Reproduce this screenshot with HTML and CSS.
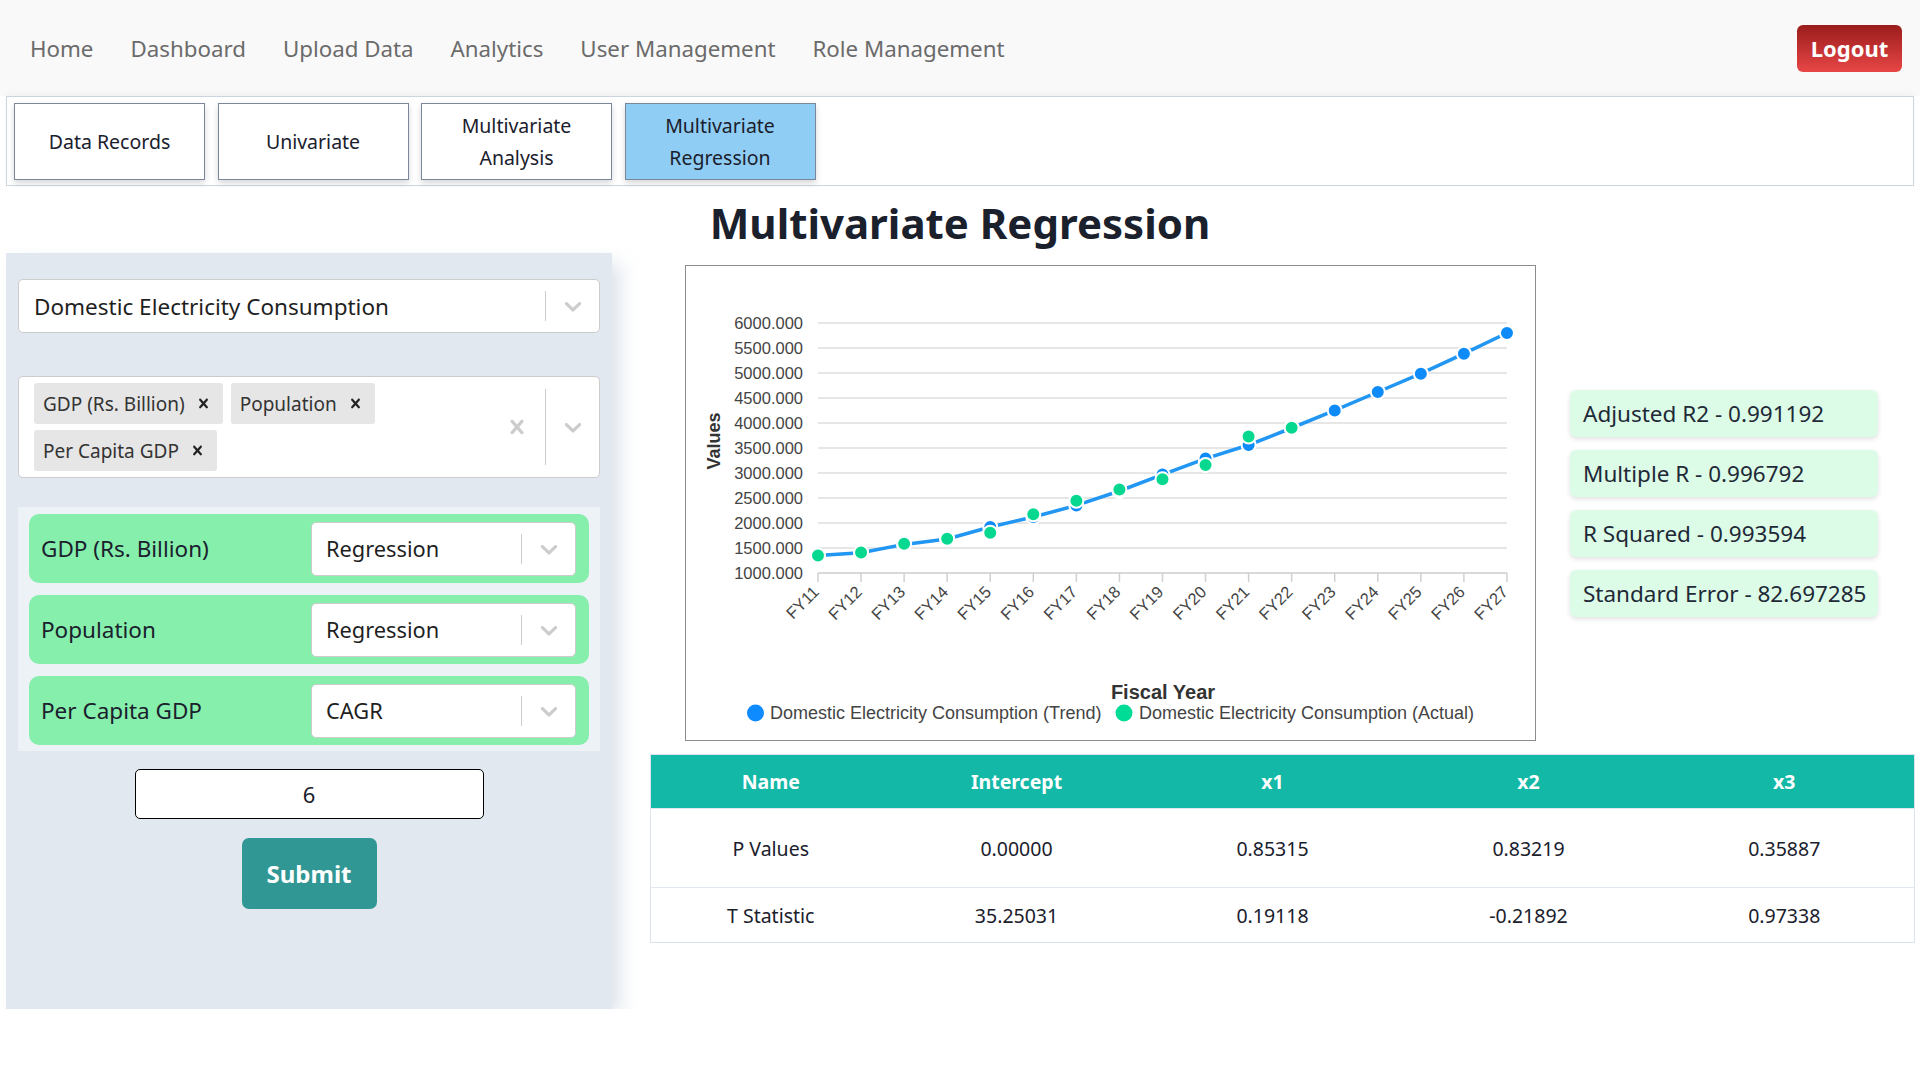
FILE: index.html
```html
<!DOCTYPE html>
<html lang="en">
<head>
<meta charset="utf-8">
<title>Multivariate Regression</title>
<link rel="stylesheet" href="styles.css">
</head>
<body>
<header class="nav">
  <nav class="nav-links">
    <span class="nav-link">Home</span>
    <span class="nav-link">Dashboard</span>
    <span class="nav-link">Upload Data</span>
    <span class="nav-link">Analytics</span>
    <span class="nav-link">User Management</span>
    <span class="nav-link">Role Management</span>
  </nav>
  <div class="logout">Logout</div>
</header>

<div class="tabbar">
  <div class="tab">Data Records</div>
  <div class="tab">Univariate</div>
  <div class="tab">Multivariate<br>Analysis</div>
  <div class="tab active">Multivariate<br>Regression</div>
</div>

<h1 class="title">Multivariate Regression</h1>

<main class="main">
  <aside class="panel">
    <div class="select">
      <div class="select-value">Domestic Electricity Consumption</div>
      <div class="sep"></div>
      <div class="indicator">
        <svg class="chev" viewBox="0 0 20 20"><path d="M4.516 7.548c0.436-0.446 1.043-0.481 1.576 0l3.908 3.747 3.908-3.747c0.533-0.481 1.141-0.446 1.574 0 0.436 0.445 0.408 1.197 0 1.615-0.406 0.418-4.695 4.502-4.695 4.502-0.217 0.223-0.502 0.335-0.787 0.335s-0.57-0.112-0.789-0.335c0 0-4.287-4.084-4.695-4.502s-0.436-1.170 0-1.615z"/></svg>
      </div>
    </div>

    <div class="select multi">
      <div class="chips">
        <div class="chip"><span>GDP (Rs. Billion)</span><svg class="chip-x" viewBox="0 0 20 20"><path d="M14.348 14.849c-0.469 0.469-1.229 0.469-1.697 0l-2.651-3.030-2.651 3.029c-0.469 0.469-1.229 0.469-1.697 0-0.469-0.469-0.469-1.229 0-1.697l2.758-3.15-2.759-3.152c-0.469-0.469-0.469-1.228 0-1.697s1.228-0.469 1.697 0l2.652 3.031 2.651-3.031c0.469-0.469 1.228-0.469 1.697 0s0.469 1.229 0 1.697l-2.758 3.152 2.758 3.15c0.469 0.469 0.469 1.229 0 1.698z"/></svg></div>
        <div class="chip"><span>Population</span><svg class="chip-x" viewBox="0 0 20 20"><path d="M14.348 14.849c-0.469 0.469-1.229 0.469-1.697 0l-2.651-3.030-2.651 3.029c-0.469 0.469-1.229 0.469-1.697 0-0.469-0.469-0.469-1.229 0-1.697l2.758-3.15-2.759-3.152c-0.469-0.469-0.469-1.228 0-1.697s1.228-0.469 1.697 0l2.652 3.031 2.651-3.031c0.469-0.469 1.228-0.469 1.697 0s0.469 1.229 0 1.697l-2.758 3.152 2.758 3.15c0.469 0.469 0.469 1.229 0 1.698z"/></svg></div>
        <div class="chip"><span>Per Capita GDP</span><svg class="chip-x" viewBox="0 0 20 20"><path d="M14.348 14.849c-0.469 0.469-1.229 0.469-1.697 0l-2.651-3.030-2.651 3.029c-0.469 0.469-1.229 0.469-1.697 0-0.469-0.469-0.469-1.229 0-1.697l2.758-3.15-2.759-3.152c-0.469-0.469-0.469-1.228 0-1.697s1.228-0.469 1.697 0l2.652 3.031 2.651-3.031c0.469-0.469 1.228-0.469 1.697 0s0.469 1.229 0 1.697l-2.758 3.152 2.758 3.15c0.469 0.469 0.469 1.229 0 1.698z"/></svg></div>
      </div>
      <div class="clear">
        <svg class="cross" viewBox="0 0 20 20"><path d="M14.348 14.849c-0.469 0.469-1.229 0.469-1.697 0l-2.651-3.030-2.651 3.029c-0.469 0.469-1.229 0.469-1.697 0-0.469-0.469-0.469-1.229 0-1.697l2.758-3.15-2.759-3.152c-0.469-0.469-0.469-1.228 0-1.697s1.228-0.469 1.697 0l2.652 3.031 2.651-3.031c0.469-0.469 1.228-0.469 1.697 0s0.469 1.229 0 1.697l-2.758 3.152 2.758 3.15c0.469 0.469 0.469 1.229 0 1.698z"/></svg>
      </div>
      <div class="sep sep-multi"></div>
      <div class="indicator">
        <svg class="chev" viewBox="0 0 20 20"><path d="M4.516 7.548c0.436-0.446 1.043-0.481 1.576 0l3.908 3.747 3.908-3.747c0.533-0.481 1.141-0.446 1.574 0 0.436 0.445 0.408 1.197 0 1.615-0.406 0.418-4.695 4.502-4.695 4.502-0.217 0.223-0.502 0.335-0.787 0.335s-0.57-0.112-0.789-0.335c0 0-4.287-4.084-4.695-4.502s-0.436-1.170 0-1.615z"/></svg>
      </div>
    </div>

    <div class="methods">
      <div class="method-row">
        <div class="method-label">GDP (Rs. Billion)</div>
        <div class="select small">
          <div class="select-value">Regression</div>
          <div class="sep"></div>
          <div class="indicator"><svg class="chev" viewBox="0 0 20 20"><path d="M4.516 7.548c0.436-0.446 1.043-0.481 1.576 0l3.908 3.747 3.908-3.747c0.533-0.481 1.141-0.446 1.574 0 0.436 0.445 0.408 1.197 0 1.615-0.406 0.418-4.695 4.502-4.695 4.502-0.217 0.223-0.502 0.335-0.787 0.335s-0.57-0.112-0.789-0.335c0 0-4.287-4.084-4.695-4.502s-0.436-1.170 0-1.615z"/></svg></div>
        </div>
      </div>
      <div class="method-row">
        <div class="method-label">Population</div>
        <div class="select small">
          <div class="select-value">Regression</div>
          <div class="sep"></div>
          <div class="indicator"><svg class="chev" viewBox="0 0 20 20"><path d="M4.516 7.548c0.436-0.446 1.043-0.481 1.576 0l3.908 3.747 3.908-3.747c0.533-0.481 1.141-0.446 1.574 0 0.436 0.445 0.408 1.197 0 1.615-0.406 0.418-4.695 4.502-4.695 4.502-0.217 0.223-0.502 0.335-0.787 0.335s-0.57-0.112-0.789-0.335c0 0-4.287-4.084-4.695-4.502s-0.436-1.170 0-1.615z"/></svg></div>
        </div>
      </div>
      <div class="method-row">
        <div class="method-label">Per Capita GDP</div>
        <div class="select small">
          <div class="select-value">CAGR</div>
          <div class="sep"></div>
          <div class="indicator"><svg class="chev" viewBox="0 0 20 20"><path d="M4.516 7.548c0.436-0.446 1.043-0.481 1.576 0l3.908 3.747 3.908-3.747c0.533-0.481 1.141-0.446 1.574 0 0.436 0.445 0.408 1.197 0 1.615-0.406 0.418-4.695 4.502-4.695 4.502-0.217 0.223-0.502 0.335-0.787 0.335s-0.57-0.112-0.789-0.335c0 0-4.287-4.084-4.695-4.502s-0.436-1.170 0-1.615z"/></svg></div>
        </div>
      </div>
    </div>

    <input class="years" type="text" value="6">
    <div class="submit">Submit</div>
  </aside>

  <section class="content">
    <div class="top-row">
      <div class="chart-col">
        <div class="chart-box">
          <svg class="chart" width="849" height="474" viewBox="0 0 849 474">
            <g class="grid">
              <line x1="132" y1="57" x2="821" y2="57"/>
              <line x1="132" y1="82" x2="821" y2="82"/>
              <line x1="132" y1="107" x2="821" y2="107"/>
              <line x1="132" y1="132" x2="821" y2="132"/>
              <line x1="132" y1="157" x2="821" y2="157"/>
              <line x1="132" y1="182" x2="821" y2="182"/>
              <line x1="132" y1="207" x2="821" y2="207"/>
              <line x1="132" y1="232" x2="821" y2="232"/>
              <line x1="132" y1="257" x2="821" y2="257"/>
              <line x1="132" y1="282" x2="821" y2="282"/>
            </g>
            <line class="axis" x1="132" y1="307" x2="821" y2="307"/>
            <g class="ticks">
              <line x1="132" y1="307" x2="132" y2="316"/>
              <line x1="175.06" y1="307" x2="175.06" y2="316"/>
              <line x1="218.12" y1="307" x2="218.12" y2="316"/>
              <line x1="261.18" y1="307" x2="261.18" y2="316"/>
              <line x1="304.24" y1="307" x2="304.24" y2="316"/>
              <line x1="347.3" y1="307" x2="347.3" y2="316"/>
              <line x1="390.36" y1="307" x2="390.36" y2="316"/>
              <line x1="433.42" y1="307" x2="433.42" y2="316"/>
              <line x1="476.48" y1="307" x2="476.48" y2="316"/>
              <line x1="519.54" y1="307" x2="519.54" y2="316"/>
              <line x1="562.6" y1="307" x2="562.6" y2="316"/>
              <line x1="605.66" y1="307" x2="605.66" y2="316"/>
              <line x1="648.72" y1="307" x2="648.72" y2="316"/>
              <line x1="691.78" y1="307" x2="691.78" y2="316"/>
              <line x1="734.84" y1="307" x2="734.84" y2="316"/>
              <line x1="777.9" y1="307" x2="777.9" y2="316"/>
              <line x1="820.96" y1="307" x2="820.96" y2="316"/>
            </g>
            <g class="ylabels">
              <text x="117" y="63">6000.000</text>
              <text x="117" y="88">5500.000</text>
              <text x="117" y="113">5000.000</text>
              <text x="117" y="138">4500.000</text>
              <text x="117" y="163">4000.000</text>
              <text x="117" y="188">3500.000</text>
              <text x="117" y="213">3000.000</text>
              <text x="117" y="238">2500.000</text>
              <text x="117" y="263">2000.000</text>
              <text x="117" y="288">1500.000</text>
              <text x="117" y="313">1000.000</text>
            </g>
            <g class="xlabels">
              <text transform="translate(134,327) rotate(-45)">FY11</text>
              <text transform="translate(177.06,327) rotate(-45)">FY12</text>
              <text transform="translate(220.12,327) rotate(-45)">FY13</text>
              <text transform="translate(263.18,327) rotate(-45)">FY14</text>
              <text transform="translate(306.24,327) rotate(-45)">FY15</text>
              <text transform="translate(349.3,327) rotate(-45)">FY16</text>
              <text transform="translate(392.36,327) rotate(-45)">FY17</text>
              <text transform="translate(435.42,327) rotate(-45)">FY18</text>
              <text transform="translate(478.48,327) rotate(-45)">FY19</text>
              <text transform="translate(521.54,327) rotate(-45)">FY20</text>
              <text transform="translate(564.6,327) rotate(-45)">FY21</text>
              <text transform="translate(607.66,327) rotate(-45)">FY22</text>
              <text transform="translate(650.72,327) rotate(-45)">FY23</text>
              <text transform="translate(693.78,327) rotate(-45)">FY24</text>
              <text transform="translate(736.84,327) rotate(-45)">FY25</text>
              <text transform="translate(779.9,327) rotate(-45)">FY26</text>
              <text transform="translate(822.96,327) rotate(-45)">FY27</text>
            </g>
            <text class="axis-title" transform="translate(34,175) rotate(-90)">Values</text>
            <text class="axis-title xt" x="477" y="433">Fiscal Year</text>

            <polyline class="trend-line" points="132,289.4 175.06,286.7 218.12,278.4 261.18,273 304.24,261 347.3,251 390.36,239.4 433.42,225 476.48,208.6 519.54,192.6 562.6,179 605.66,162 648.72,144.4 691.78,126 734.84,107.7 777.9,87.7 820.96,67"/>
            <g class="trend-pts">
              <circle cx="132" cy="289.4" r="7"/>
              <circle cx="175.06" cy="286.7" r="7"/>
              <circle cx="218.12" cy="278.4" r="7"/>
              <circle cx="261.18" cy="273" r="7"/>
              <circle cx="304.24" cy="261" r="7"/>
              <circle cx="347.3" cy="251" r="7"/>
              <circle cx="390.36" cy="239.4" r="7"/>
              <circle cx="433.42" cy="225" r="7"/>
              <circle cx="476.48" cy="208.6" r="7"/>
              <circle cx="519.54" cy="192.6" r="7"/>
              <circle cx="562.6" cy="179" r="7"/>
              <circle cx="605.66" cy="162" r="7"/>
              <circle cx="648.72" cy="144.4" r="7"/>
              <circle cx="691.78" cy="126" r="7"/>
              <circle cx="734.84" cy="107.7" r="7"/>
              <circle cx="777.9" cy="87.7" r="7"/>
              <circle cx="820.96" cy="67" r="7"/>
            </g>
            <g class="actual-pts">
              <circle cx="132" cy="289.4" r="7"/>
              <circle cx="175.06" cy="286.5" r="7"/>
              <circle cx="218.12" cy="277.7" r="7"/>
              <circle cx="261.18" cy="272.8" r="7"/>
              <circle cx="304.24" cy="266.7" r="7"/>
              <circle cx="347.3" cy="248.3" r="7"/>
              <circle cx="390.36" cy="234.8" r="7"/>
              <circle cx="433.42" cy="223.5" r="7"/>
              <circle cx="476.48" cy="213.3" r="7"/>
              <circle cx="519.54" cy="199" r="7"/>
              <circle cx="562.6" cy="170.5" r="7"/>
              <circle cx="605.66" cy="161.7" r="7"/>
            </g>

            <circle class="leg-blue" cx="69.5" cy="447" r="8.5"/>
            <text class="legend" x="84" y="453">Domestic Electricity Consumption (Trend)</text>
            <circle class="leg-green" cx="438" cy="447" r="8.5"/>
            <text class="legend" x="453" y="453">Domestic Electricity Consumption (Actual)</text>
          </svg>
        </div>
      </div>
      <div class="stats">
        <div class="stat">Adjusted R2 - 0.991192</div>
        <div class="stat">Multiple R - 0.996792</div>
        <div class="stat">R Squared - 0.993594</div>
        <div class="stat">Standard Error - 82.697285</div>
      </div>
    </div>

    <table class="results">
      <colgroup>
        <col class="col-narrow">
        <col class="col-mid">
        <col class="col-wide">
        <col class="col-mid">
        <col class="col-wide">
      </colgroup>
      <thead>
        <tr><th>Name</th><th>Intercept</th><th>x1</th><th>x2</th><th>x3</th></tr>
      </thead>
      <tbody>
        <tr class="row-first"><td>P Values</td><td>0.00000</td><td>0.85315</td><td>0.83219</td><td>0.35887</td></tr>
        <tr class="row-second"><td>T Statistic</td><td>35.25031</td><td>0.19118</td><td>-0.21892</td><td>0.97338</td></tr>
      </tbody>
    </table>
  </section>
</main>
</body>
</html>
```

FILE: styles.css
```css
* { box-sizing: border-box; }

body {
  margin: 0;
  font-family: "Noto Sans", "Open Sans", sans-serif;
  background: #ffffff;
  color: #1a202c;
}

/* ---------- top nav ---------- */
.nav {
  height: 96px;
  background: #f9f9f9;
  display: flex;
  align-items: center;
  padding: 0 18px 0 30px;
}
.nav-links { display: flex; gap: 37px; }
.nav-link { font-size: 22.3px; color: #6b6b6b; }

.logout {
  margin-left: auto;
  width: 105px;
  height: 47px;
  border-radius: 6px;
  background: linear-gradient(#9b1c1c, #e84646);
  color: #fff;
  font-weight: 700;
  font-size: 22px;
  display: flex;
  align-items: center;
  justify-content: center;
}

/* ---------- tabs ---------- */
.tabbar {
  margin: 0 6px;
  border: 1px solid #cbd5e0;
  padding: 6px 7px 5px;
  display: flex;
  gap: 12.5px;
  box-shadow: 0 -3px 6px rgba(0, 0, 0, 0.03);
}
.tab {
  width: 191px;
  height: 77px;
  border: 1px solid #7a8699;
  background: #fff;
  box-shadow: 0 3px 6px rgba(0, 0, 0, 0.16);
  display: flex;
  align-items: center;
  justify-content: center;
  text-align: center;
  font-size: 19.5px;
  line-height: 32px;
  color: #1a202c;
}
.tab.active { background: #90cdf4; }

/* ---------- heading ---------- */
.title {
  margin: 0;
  padding: 13px 0 6px;
  font-size: 42px;
  line-height: 48px;
  font-weight: 700;
  text-align: center;
  color: #1a202c;
}

/* ---------- main layout ---------- */
.main {
  display: flex;
  align-items: flex-start;
  padding: 0 6px;
}

.panel {
  width: 606px;
  flex: none;
  background: #e2e8f0;
  padding: 26px 12px 100px;
  box-shadow: 10px 8px 18px -2px rgba(210, 218, 228, 0.75);
}

/* react-select like controls */
.select {
  height: 54px;
  background: #fff;
  border: 1px solid #cccccc;
  border-radius: 5px;
  display: flex;
  align-items: center;
}
.select-value {
  flex: 1;
  padding-left: 15px;
  font-size: 22.5px;
  color: #1f1f1f;
  white-space: nowrap;
}
.sep {
  width: 1px;
  align-self: stretch;
  margin: 11px 0;
  background: #cccccc;
}
.indicator {
  width: 53px;
  display: flex;
  justify-content: center;
  align-items: center;
}
.chev { width: 28px; height: 28px; fill: #cccccc; display: block; }

.multi {
  margin-top: 43px;
  height: 102px;
}
.chips {
  flex: 1;
  display: flex;
  flex-wrap: wrap;
  gap: 6px 8px;
  padding: 6px 0 8px 15px;
  align-self: stretch;
  align-content: flex-start;
}
.chip {
  height: 41px;
  background: #e6e6e6;
  border-radius: 3px;
  display: flex;
  align-items: center;
  padding-left: 9px;
  font-size: 19px;
  color: #333;
}
.chip-x { width: 19px; height: 19px; fill: #222; margin: 0 10px 0 9px; }
.clear {
  width: 56px;
  display: flex;
  justify-content: center;
  align-items: center;
}
.cross { width: 28px; height: 28px; fill: #cccccc; display: block; }
.sep-multi { margin: 12px 0; }

.methods {
  margin-top: 29px;
  background: #edf2f7;
  padding: 7px 11px 6px;
  display: flex;
  flex-direction: column;
  gap: 12px;
}
.method-row {
  height: 69px;
  background: #86efac;
  border-radius: 10px;
  padding: 0 13px 0 12px;
  display: flex;
  align-items: center;
}
.method-label {
  flex: 1;
  font-size: 22.5px;
  color: #1a202c;
}
.select.small { width: 265px; }
.select.small .select-value { font-size: 21.8px; padding-left: 14px; }

.years {
  display: block;
  width: 349px;
  height: 50px;
  margin: 18px auto 0;
  border: 1px solid #000;
  border-radius: 5px;
  text-align: center;
  font-family: "Noto Sans", sans-serif;
  font-size: 22px;
  color: #1a202c;
  background: #fff;
  padding: 0;
}
.submit {
  width: 135px;
  height: 71px;
  margin: 19px auto 0;
  background: #319795;
  border-radius: 7px;
  color: #fff;
  font-weight: 700;
  font-size: 24px;
  display: flex;
  align-items: center;
  justify-content: center;
}

/* ---------- right content ---------- */
.content {
  flex: 1;
  margin-left: 38px;
  padding-top: 12px;
}
.top-row {
  display: grid;
  grid-template-columns: 920px 1fr;
  align-items: center;
}
.chart-col { display: flex; justify-content: center; }
.chart-box {
  width: 851px;
  height: 476px;
  border: 1px solid #8c8c8c;
  background: #fff;
}
.chart { display: block; font-family: "Liberation Sans", Arial, sans-serif; }
.grid line { stroke: #e6e6e6; stroke-width: 2; }
.axis { stroke: #d9d9d9; stroke-width: 2; }
.ticks line { stroke: #d0d0d0; stroke-width: 1.5; }
.ylabels text { font-size: 16.5px; fill: #444; text-anchor: end; }
.xlabels text { font-size: 16.5px; fill: #444; text-anchor: end; }
.axis-title { font-size: 18px; font-weight: 700; fill: #333; text-anchor: middle; }
.axis-title.xt { font-size: 20px; }
.trend-line { fill: none; stroke: #2196f3; stroke-width: 3.5; stroke-linejoin: round; }
.trend-pts circle { fill: #0d8bf8; stroke: #fff; stroke-width: 2; }
.actual-pts circle { fill: #06d98f; stroke: #fff; stroke-width: 2; }
.leg-blue { fill: #0d8bff; }
.leg-green { fill: #00dc95; }
.legend { font-size: 18px; fill: #444; }

.stats {
  display: flex;
  flex-direction: column;
  gap: 13px;
}
.stat {
  width: 308px;
  height: 47px;
  background: #dcfce7;
  border-radius: 6px;
  box-shadow: 0 2px 5px rgba(0, 0, 0, 0.12);
  display: flex;
  align-items: center;
  padding-left: 13px;
  font-size: 22.5px;
  color: #1f2937;
  white-space: nowrap;
}

.results {
  margin-top: 13px;
  width: 100%;
  border-collapse: collapse;
  table-layout: fixed;
  border: 1px solid #dde3ea;
}
.col-narrow { width: 240px; }
.col-mid { width: 252px; }
.col-wide { width: 260px; }
.results th {
  height: 54px;
  background: #14b8a6;
  color: #fff;
  font-weight: 700;
  font-size: 19.5px;
}
.results td {
  text-align: center;
  font-size: 19.5px;
  color: #1a202c;
  border-top: 1px solid #e2e8f0;
}
.row-first td { height: 79px; }
.row-second td { height: 55px; }
```
